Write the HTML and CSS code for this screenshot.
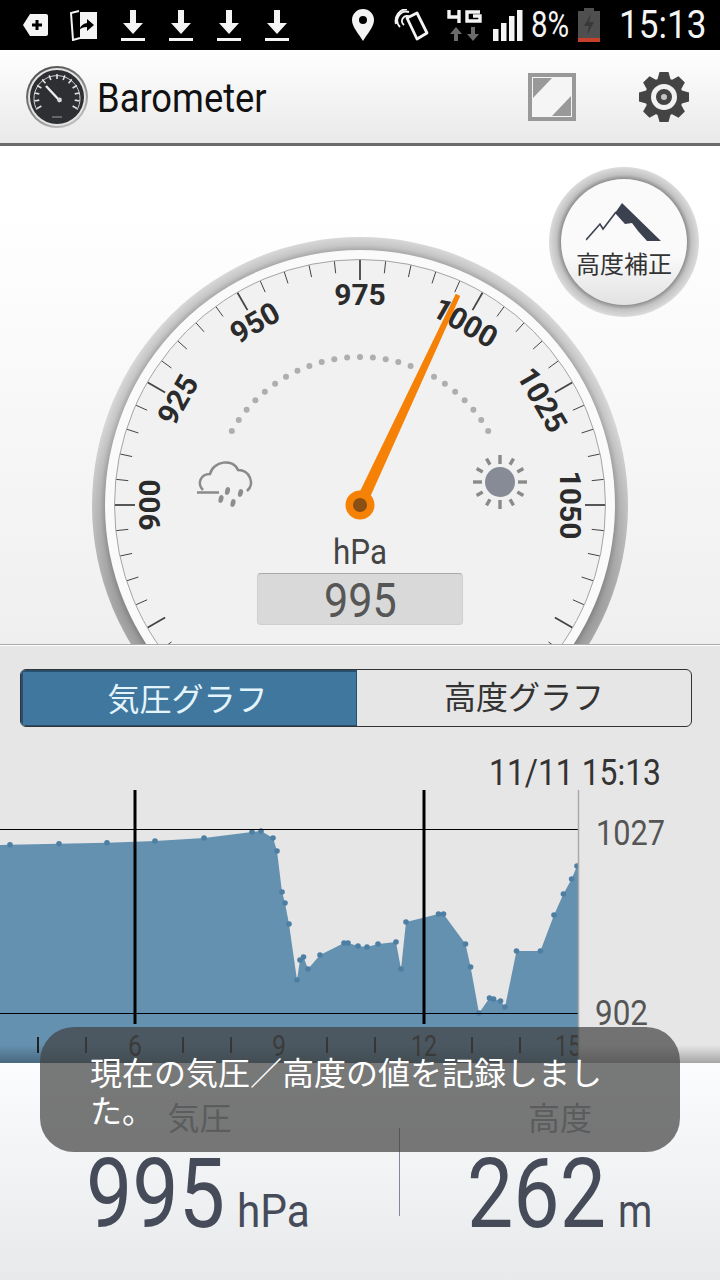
FILE: index.html
```html
<!DOCTYPE html>
<html lang="ja">
<head>
  <meta charset="UTF-8" />
  <meta name="viewport" content="width=device-width, initial-scale=1.0" />
  <title>Barometer</title>
  <link rel="stylesheet" href="styles.css">
</head>
<body>
  <div class="status">
    <svg class="st-tag" width="25" height="22" viewBox="0 0 25 22">
      <path d="M7 0H23Q25 0 25 2V20Q25 22 23 22H7L0 11Z" fill="#f4f4f4"/>
      <path d="M14 6V16M9 11H19" stroke="#000" stroke-width="3"/>
    </svg>
    <svg class="st-door" width="28" height="31" viewBox="0 0 28 31">
      <path d="M10 2H27V29H10Z" fill="#f4f4f4"/>
      <path d="M9 1L1 3L3 30L10 28" fill="none" stroke="#f4f4f4" stroke-width="2"/>
      <path d="M9 20Q11 14 17 13V9L24 15L17 21V17Q12 17 9 20Z" fill="#000"/>
    </svg>
    <svg class="st-dl" width="24" height="31" viewBox="0 0 24 31"><path d="M9 0H15V13H22L12 24L2 13H9ZM0 28H24V31H0Z" fill="#f4f4f4"/></svg>
    <svg class="st-dl" width="24" height="31" viewBox="0 0 24 31"><path d="M9 0H15V13H22L12 24L2 13H9ZM0 28H24V31H0Z" fill="#f4f4f4"/></svg>
    <svg class="st-dl" width="24" height="31" viewBox="0 0 24 31"><path d="M9 0H15V13H22L12 24L2 13H9ZM0 28H24V31H0Z" fill="#f4f4f4"/></svg>
    <svg class="st-dl" width="24" height="31" viewBox="0 0 24 31"><path d="M9 0H15V13H22L12 24L2 13H9ZM0 28H24V31H0Z" fill="#f4f4f4"/></svg>
    <svg class="st-pin" width="22" height="32" viewBox="0 0 22 32">
      <path fill-rule="evenodd" d="M11 0A11 11 0 0 1 22 11C22 18 15 25 11 32C7 25 0 18 0 11A11 11 0 0 1 11 0ZM11 7A4 4 0 1 0 11 15A4 4 0 1 0 11 7Z" fill="#f4f4f4"/>
    </svg>
    <svg class="st-nfc" width="36" height="32" viewBox="0 0 36 32">
      <path d="M14 9L24 4L34 24L24 30Z" fill="none" stroke="#f4f4f4" stroke-width="2.8" stroke-linejoin="round"/>
      <path d="M7 18A9 9 0 0 1 16 3M3 15A12 12 0 0 1 14 0M11 16A5 5 0 0 1 17 8" fill="none" stroke="#f4f4f4" stroke-width="2"/>
    </svg>
    <svg class="st-net" width="35" height="31" viewBox="0 0 35 31">
      <path d="M2 0V7H12M12 0V13M33 2H20V11H33V6H26" fill="none" stroke="#f4f4f4" stroke-width="3.4"/>
      <path d="M9 17L15 24H11V31H7V24H3ZM26 31L20 24H24V17H28V24H32Z" fill="#6b6b6b"/>
    </svg>
    <svg class="st-signal" width="30" height="31" viewBox="0 0 30 31">
      <path d="M0 19H5.500V31H0ZM8 13H13.500V31H8ZM16 6H21.500V31H16ZM24 0H29.500V31H24Z" fill="#f4f4f4"/>
    </svg>
    <span class="st-pct">8%</span>
    <svg class="st-batt" width="22" height="34" viewBox="0 0 22 34">
      <path d="M6 0H16V3H22V34H0V3H6Z" fill="#4f4f4f"/>
      <path d="M0 30H22V34H0Z" fill="#c8402c"/>
      <path d="M13 6L6 18H11L9 27L16 14H11Z" fill="#383838"/>
    </svg>
    <span class="st-time">15:13</span>
  </div>

  <header class="appbar">
    <svg class="logo" width="62" height="62" viewBox="0 0 62 62">
      <defs>
        <linearGradient id="rim" x1="0" y1="0" x2="0.6" y2="1">
          <stop offset="0" stop-color="#444"/><stop offset=".5" stop-color="#777"/><stop offset="1" stop-color="#bbb"/>
        </linearGradient>
      </defs>
      <circle cx="31" cy="31" r="31" fill="url(#rim)"/>
      <circle cx="31" cy="31" r="29" fill="#e4e4e4"/>
      <circle cx="31" cy="31" r="27" fill="#2e2f32"/>
      <path d="M11 44A23 23 0 1 1 51 44" fill="none" stroke="#cfcfcf" stroke-width="1"/>
      <g id="logoTicks" stroke="#e0e0e0" stroke-width="1.6"></g>
      <path d="M20 20L34 35" stroke="#eee" stroke-width="2.4"/>
      <circle cx="33.500" cy="34" r="2.4" fill="#d8d8d8"/>
      <path d="M26 51H36" stroke="#666" stroke-width="2"/>
    </svg>
    <div class="title-box"><h1 class="title">Barometer</h1></div>
    <svg class="resize" width="48" height="48" viewBox="0 0 48 48">
      <rect x="2" y="2" width="44" height="44" fill="#f5f5f5" stroke="#999" stroke-width="4"/>
      <path d="M5 5H24L5 25ZM43 43H24L43 23Z" fill="#999"/>
    </svg>
    <svg class="gear" width="50" height="50" viewBox="0 0 50 50">
      <defs><path id="tooth" d="M20.500 0H29.500L32 9H18Z"/></defs>
      <g fill="#444">
        <circle cx="25" cy="25" r="19"/>
        <use href="#tooth"/>
        <use href="#tooth" transform="rotate(45 25 25)"/>
        <use href="#tooth" transform="rotate(90 25 25)"/>
        <use href="#tooth" transform="rotate(135 25 25)"/>
        <use href="#tooth" transform="rotate(180 25 25)"/>
        <use href="#tooth" transform="rotate(225 25 25)"/>
        <use href="#tooth" transform="rotate(270 25 25)"/>
        <use href="#tooth" transform="rotate(315 25 25)"/>
      </g>
      <circle cx="25" cy="25" r="10.500" fill="none" stroke="#f2f2f2" stroke-width="5"/>
      <circle cx="25" cy="25" r="3" fill="#c4c4c4"/>
    </svg>
  </header>

  <section class="gauge">
    <svg class="gauge-svg" width="720" height="498" viewBox="0 146 720 498">
      <defs>
        <radialGradient id="outer" gradientUnits="userSpaceOnUse" cx="360" cy="505" r="268">
          <stop offset=".95" stop-color="#a6a6a6"/><stop offset=".97" stop-color="#c6c6c6"/><stop offset="1" stop-color="#d8d8d8"/>
        </radialGradient>
        <linearGradient id="shade" x1="0" y1="0" x2="0" y2="1">
          <stop offset=".35" stop-color="#000" stop-opacity="0"/><stop offset=".7" stop-color="#000" stop-opacity=".22"/>
        </linearGradient>
      </defs>
      <circle cx="360" cy="505" r="268" fill="url(#outer)"/>
      <circle cx="360" cy="505" r="268" fill="url(#shade)"/>
      <circle cx="360" cy="505" r="255" fill="#fafafa"/>
      <circle cx="360" cy="505" r="245.5" fill="#f1f1f1" stroke="#a4a4a4" stroke-width="1"/>
      <g id="ticks" stroke="#444"></g>
      <g id="dots" fill="#aeaeae"></g>

      <text class="num" text-anchor="middle" transform="rotate(-90 360 505) translate(360 305)">900</text>
      <text class="num" text-anchor="middle" transform="rotate(-60 360 505) translate(360 305)">925</text>
      <text class="num" text-anchor="middle" transform="rotate(-30 360 505) translate(360 305)">950</text>
      <text class="num" text-anchor="middle" transform="translate(360 305)">975</text>
      <text class="num" text-anchor="middle" transform="rotate(30 360 505) translate(360 305)">1000</text>
      <text class="num" text-anchor="middle" transform="rotate(60 360 505) translate(360 305)">1025</text>
      <text class="num" text-anchor="middle" transform="rotate(90 360 505) translate(360 305)">1050</text>

      <!-- rain -->
      <path d="M197 492.500H219M203 490C197 484 200 474 210 474C213 461 233 458 238 470C250 470 255 484 247 491" fill="none" stroke="#8a8a8a" stroke-width="2.5"/>
      <g fill="#8d8d8d">
        <ellipse cx="221" cy="499" rx="2.4" ry="4" transform="rotate(15 221 499)"/>
        <ellipse cx="227.500" cy="491" rx="2.4" ry="4" transform="rotate(15 227.500 491)"/>
        <ellipse cx="233" cy="503" rx="2.4" ry="4" transform="rotate(15 233 503)"/>
        <ellipse cx="240.500" cy="493" rx="2.4" ry="4" transform="rotate(15 240.500 493)"/>
      </g>
      <!-- sun -->
      <circle cx="500" cy="482" r="15" fill="#868b96"/>
      <g id="rays" stroke="#8a8a8a" stroke-width="3.4"></g>

      <path d="M354.600 502.600L455.800 293.800L460.200 295.900L365.400 507.400Z" fill="#f58207"/>
      <circle cx="360" cy="505" r="14.500" fill="#f58207"/>
      <circle cx="360" cy="505" r="7" fill="#8a4f14"/>

      <text class="unit" x="360" y="564" text-anchor="middle" textLength="54" lengthAdjust="spacingAndGlyphs">hPa</text>
    </svg>
    <div class="readout"><span class="readout-num">995</span></div>
    <button class="calib">
      <span class="calib-face">
        <svg width="76" height="40" viewBox="0 0 76 40">
          <path d="M36 1L75 39H61L52 29L46 21L39 22L29 11Z" fill="#3c4150"/>
          <path d="M30 10L17 27L14 22L0 38" fill="none" stroke="#3c4150" stroke-width="1.6"/>
        </svg>
        <span class="calib-text">高度補正</span>
      </span>
    </button>
  </section>

  <section class="graphs">
    <div class="tabs">
      <div class="tab tab-on">気圧グラフ</div>
      <div class="tab">高度グラフ</div>
    </div>
    <svg class="chart" width="720" height="318" viewBox="0 745 720 318">
      <defs>
        <linearGradient id="fade" x1="0" y1="0" x2="0" y2="1">
          <stop offset="0" stop-color="#000" stop-opacity="0"/><stop offset="1" stop-color="#000" stop-opacity=".28"/>
        </linearGradient>
      </defs>
      <polygon id="area" fill="#6591b0"></polygon>
      <g id="points" fill="#4d7fa3"></g>
      <path d="M0 829.500H578M0 1013.500H578" stroke="#000" stroke-width="1.2"/>
      <path d="M135 790V1024M424 790V1024" stroke="#000" stroke-width="3"/>
      <g id="hours" stroke="#222" stroke-width="2"></g>
      <text class="hour" x="135" y="1056" text-anchor="middle" textLength="14" lengthAdjust="spacingAndGlyphs">6</text>
      <text class="hour" x="279" y="1056" text-anchor="middle" textLength="14" lengthAdjust="spacingAndGlyphs">9</text>
      <text class="hour" x="424" y="1056" text-anchor="middle" textLength="26" lengthAdjust="spacingAndGlyphs">12</text>
      <text class="hour" x="568" y="1056" text-anchor="middle" textLength="26" lengthAdjust="spacingAndGlyphs">15</text>
      <rect x="578" y="745" width="142" height="318" fill="#e6e6e6"/>
      <path d="M578.500 790V1063" stroke="#aaa" stroke-width="1.5"/>
      <text class="stamp" x="489" y="785" textLength="172" lengthAdjust="spacingAndGlyphs">11/11 15:13</text>
      <text class="level" x="596" y="845" textLength="69" lengthAdjust="spacingAndGlyphs">1027</text>
      <text class="level" x="595" y="1025" textLength="53" lengthAdjust="spacingAndGlyphs">902</text>
      <rect x="0" y="1045" width="720" height="18" fill="url(#fade)"/>
    </svg>
  </section>

  <section class="values">
    <div class="col col-left">
      <div class="col-label">気圧</div>
      <div class="col-value"><span class="big">995</span><span class="small small-hpa">hPa</span></div>
    </div>
    <div class="divider"></div>
    <div class="col col-right">
      <div class="col-label">高度</div>
      <div class="col-value"><span class="big">262</span><span class="small small-m">m</span></div>
    </div>
  </section>

  <div class="toast">現在の気圧／高度の値を記録しました。</div>

  <script src="script.js"></script>
</body>
</html>
```

FILE: styles.css
```css
* {
  box-sizing: border-box;
}
body {
  margin: 0;
  width: 720px;
  height: 1280px;
  overflow: hidden;
  position: relative;
  font-family: Roboto, "Noto Sans CJK JP", sans-serif;
  background: #fff;
}
svg {
  display: block;
  flex: none;
}

/* status bar */
.status {
  height: 50px;
  background: #000;
  color: #f4f4f4;
  display: flex;
  align-items: center;
  padding-left: 23px;
}
.st-door { margin-left: 22px; }
.st-dl { margin-left: 24px; }
.st-door + .st-dl { margin-left: 23px; }
.st-pin { margin-left: 63px; }
.st-nfc { margin-left: 19px; }
.st-net { margin-left: 18px; }
.st-signal { margin-left: 11px; }
.st-pct {
  flex: none;
  margin-left: 8px;
  width: 38px;
  font-size: 36px;
  line-height: 50px;
  white-space: nowrap;
  transform: scaleX(0.82);
  transform-origin: left;
}
.st-batt { margin-left: 9px; }
.st-time {
  flex: none;
  margin-left: 19px;
  width: 87px;
  font-size: 39px;
  line-height: 50px;
  white-space: nowrap;
  transform: scaleX(0.9);
  transform-origin: left;
}

/* app bar */
.appbar {
  height: 96px;
  display: flex;
  align-items: center;
  padding: 0 31px 0 26px;
  background: linear-gradient(#fff, #e9e9e9);
  border-bottom: 3px solid #6a6a6a;
}
.title-box {
  flex: 1;
  margin: 3px 0 0 9px;
}
.title {
  margin: 0;
  font-size: 40px;
  font-weight: 400;
  color: #111;
  transform: scaleX(0.908);
  transform-origin: left;
}
.resize { margin-right: 63px; }

/* gauge */
.gauge {
  height: 499px;
  position: relative;
  overflow: hidden;
  background: linear-gradient(#fff 12%, #efefef);
  border-bottom: 1px solid #aaa;
}
.num {
  font-weight: 700;
  font-size: 30px;
  fill: #2b2b2b;
}
.unit {
  font-size: 35px;
  fill: #444;
}
.readout {
  position: absolute;
  left: 257px;
  top: 427px;
  width: 206px;
  height: 52px;
  background: #d9d9d9;
  border: 1px solid #cfcfcf;
  border-top-color: #a8a8a8;
  border-radius: 4px;
  text-align: center;
  font-size: 49px;
  line-height: 54px;
  color: #565656;
}
.readout-num {
  display: inline-block;
  transform: scaleX(0.88);
}
.calib {
  position: absolute;
  left: 549px;
  top: 21px;
  width: 150px;
  height: 150px;
  padding: 12px;
  border: 0;
  border-radius: 50%;
  background: radial-gradient(circle closest-side, #8e8e8e 84%, #c2c2c2 90%, #dcdcdc 100%);
}
.calib-face {
  display: flex;
  flex-direction: column;
  align-items: center;
  height: 126px;
  padding-top: 23px;
  border-radius: 50%;
  background: linear-gradient(#fafafa 60%, #e2e2e2);
}
.calib-text {
  margin-top: 4px;
  font-family: "Noto Sans CJK JP", sans-serif;
  font-size: 24px;
  line-height: 34px;
  color: #333;
}

/* graphs */
.graphs {
  height: 418px;
  background: #e6e6e6;
  border-top: 1px solid #fff;
}
.tabs {
  display: flex;
  height: 58px;
  margin: 23px 28px 18px 20px;
  border: 1px solid #333;
  border-radius: 6px;
  overflow: hidden;
}
.tab {
  flex: 1;
  text-align: center;
  font-family: "Noto Sans CJK JP", sans-serif;
  font-size: 32px;
  line-height: 50px;
  color: #333;
}
.tab-on {
  flex: 0 0 336px;
  padding-right: 4px;
  background: #3f779f;
  border: 2px solid #27506e;
  border-width: 2px 1px 1px 2px;
  color: #e4f4fb;
}
.stamp {
  font-size: 37px;
  fill: #333;
}
.level {
  font-size: 35px;
  fill: #555;
}
.hour {
  font-size: 30px;
  fill: #333;
}

/* values */
.values {
  height: 217px;
  display: flex;
  background: linear-gradient(#fafcfd, #e8e9ea);
}
.col {
  display: flex;
  flex-direction: column;
  align-items: center;
  padding-top: 35px;
}
.col-left { width: 399px; }
.col-right { flex: 1; }
.col-label {
  font-family: "Noto Sans CJK JP", sans-serif;
  font-size: 32px;
  line-height: 36px;
  color: #9c9ea2;
}
.col-value {
  display: flex;
  align-items: baseline;
  gap: 14px;
  margin-top: 14px;
  padding-right: 4px;
  color: #454b58;
}
.big {
  width: 137px;
  font-size: 97px;
  line-height: 92px;
  white-space: nowrap;
  transform: scaleX(0.85);
  transform-origin: left;
}
.small {
  font-size: 46px;
  white-space: nowrap;
  transform-origin: left;
}
.small-hpa {
  width: 72px;
  transform: scaleX(0.92);
}
.small-m {
  width: 32px;
  transform: scaleX(0.85);
}
.divider {
  width: 1px;
  height: 88px;
  margin-top: 65px;
  background: #7f8894;
}

/* toast */
.toast {
  position: absolute;
  left: 40px;
  top: 1027px;
  width: 640px;
  height: 125px;
  padding: 25px 50px;
  border-radius: 34px;
  background: rgba(64, 64, 64, 0.7);
  font-family: "Noto Sans CJK JP", sans-serif;
  font-size: 32px;
  line-height: 38px;
  color: #fff;
}
```

FILE: script.js
```js
const NS = "http://www.w3.org/2000/svg";
const CX = 360;
const CY = 505;

function el(parent, name, attrs) {
  const node = document.createElementNS(NS, name);
  for (const k in attrs) node.setAttribute(k, attrs[k]);
  document.getElementById(parent).appendChild(node);
}

function polar(r, deg, cx, cy) {
  const a = (deg * Math.PI) / 180;
  return [cx + r * Math.sin(a), cy - r * Math.cos(a)];
}

// scale ticks, a long one every 30 degrees
for (let d = -150; d <= 150; d += 6) {
  const major = d % 30 === 0;
  const a = polar(245, d, CX, CY);
  const b = polar(major ? 225 : 233, d, CX, CY);
  el("ticks", "line", { x1: a[0], y1: a[1], x2: b[0], y2: b[1], "stroke-width": major ? 1.8 : 1 });
}

for (let d = -60; d <= 60; d += 5) {
  const p = polar(148, d, CX, CY);
  el("dots", "circle", { cx: p[0], cy: p[1], r: 3 });
}

for (let d = 0; d < 360; d += 30) {
  const a = polar(d % 90 === 0 ? 18 : 20, d, 500, 482);
  const b = polar(27, d, 500, 482);
  el("rays", "line", { x1: a[0], y1: a[1], x2: b[0], y2: b[1] });
}

for (let d = -120; d <= 120; d += 20) {
  const a = polar(23, d, 31, 31);
  const b = polar(18, d, 31, 31);
  el("logoTicks", "line", { x1: a[0], y1: a[1], x2: b[0], y2: b[1] });
}

const data = [
  [0, 845], [10, 844.7], [59, 843.7], [107, 842.7], [155, 841], [204, 838], [252, 832], [261, 831],
  [273, 838], [277, 851], [282, 892], [285, 903], [289, 924], [297, 980], [300, 960], [303.5, 957],
  [308, 969], [320, 955], [344, 943], [348, 943], [358, 946], [367, 947], [378, 944], [396, 942],
  [401, 969], [406, 922], [438.5, 914], [443.5, 914], [465.5, 944], [470.6, 967], [479, 1013],
  [489.5, 998], [493.6, 999], [500.5, 1001], [505, 1007], [516.5, 951], [540.4, 951], [554, 915],
  [563.4, 894], [571.6, 879], [577, 866],
];

const line = data.map((p) => p.join(",")).join(" ");
document.getElementById("area").setAttribute("points", "0,1063 " + line + " 578,866 578,1063");
data.slice(1).forEach((p) => el("points", "circle", { cx: p[0], cy: p[1], r: 2.8 }));

[38, 86, 183, 231, 327, 375, 472, 520].forEach((x) => {
  el("hours", "line", { x1: x, y1: 1037, x2: x, y2: 1053 });
});
```
